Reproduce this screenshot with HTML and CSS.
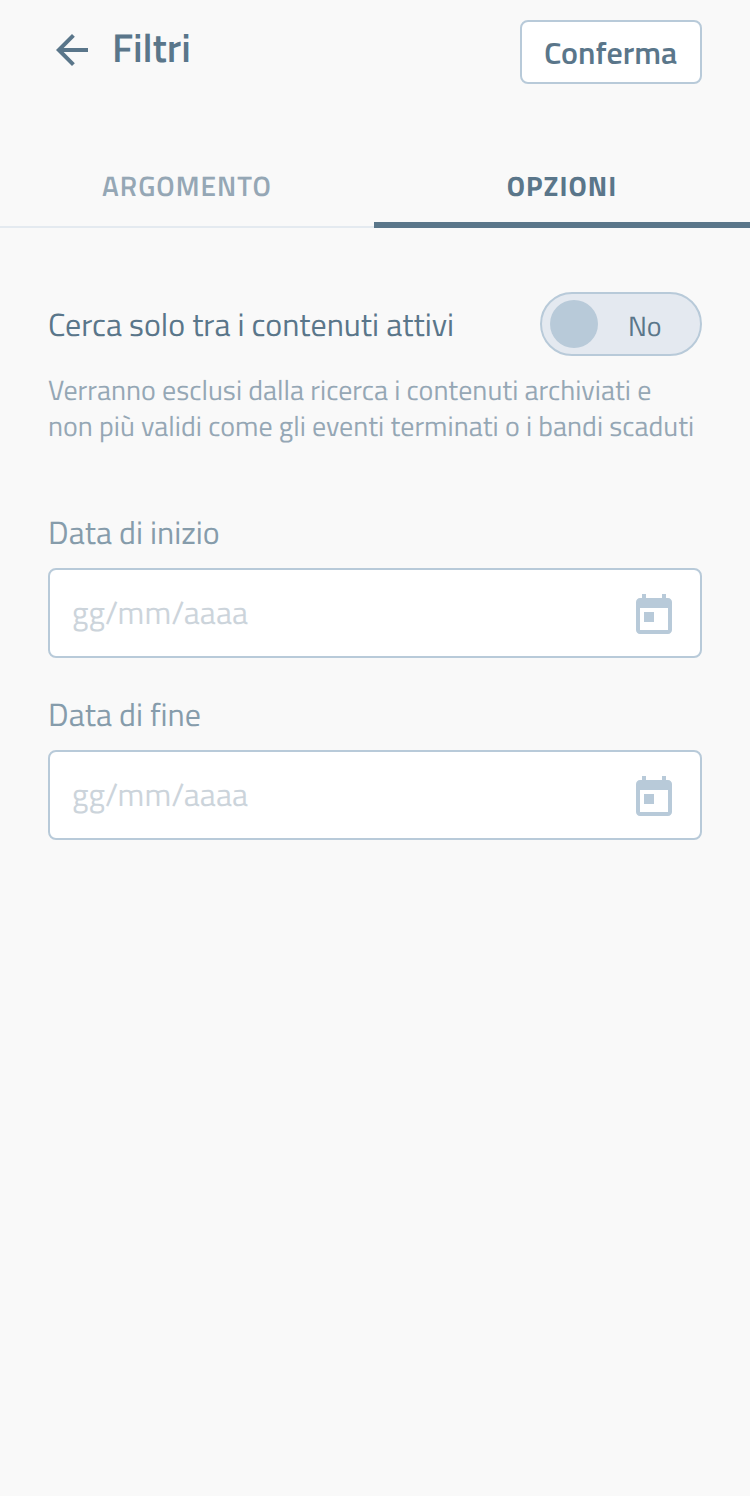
FILE: index.html
```
<!DOCTYPE html>
<html lang="it">
<head>
<meta charset="utf-8">
<title>Filtri</title>
<link rel="stylesheet" href="styles.css">
</head>
<body>
<header class="header">
  <svg class="back" viewBox="0 0 24 24"><path d="M20 11H7.83l5.59-5.59L12 4l-8 8 8 8 1.41-1.41L7.83 13H20v-2z"/></svg>
  <h1 class="title">Filtri</h1>
  <button class="confirm">Conferma</button>
</header>
<nav class="tabs">
  <a class="tab">ARGOMENTO</a>
  <a class="tab tab-active">OPZIONI</a>
</nav>
<main class="content">
  <div class="option">
    <span class="option-label">Cerca solo tra i contenuti attivi</span>
    <div class="toggle"><i class="knob"></i><span class="toggle-text">No</span></div>
  </div>
  <p class="help">Verranno esclusi dalla ricerca i contenuti archiviati e<br>non più validi come gli eventi terminati o i bandi scaduti</p>
  <div class="field">
    <label class="label">Data di inizio</label>
    <div class="input"><span class="placeholder">gg/mm/aaaa</span>
      <svg class="calendar" viewBox="0 0 24 24"><path d="M19 3h-1V1h-2v2H8V1H6v2H5c-1.11 0-1.99.9-1.99 2L3 19c0 1.1.89 2 2 2h14c1.1 0 2-.9 2-2V5c0-1.1-.9-2-2-2zm0 16H5V8h14v11zM7 10h5v5H7z"/></svg>
    </div>
  </div>
  <div class="field">
    <label class="label">Data di fine</label>
    <div class="input"><span class="placeholder">gg/mm/aaaa</span>
      <svg class="calendar" viewBox="0 0 24 24"><path d="M19 3h-1V1h-2v2H8V1H6v2H5c-1.11 0-1.99.9-1.99 2L3 19c0 1.1.89 2 2 2h14c1.1 0 2-.9 2-2V5c0-1.1-.9-2-2-2zm0 16H5V8h14v11zM7 10h5v5H7z"/></svg>
    </div>
  </div>
</main>
</body>
</html>
```
FILE: styles.css
```
* { box-sizing: border-box; }
body {
  margin: 0;
  min-height: 1496px;
  background: #f9f9f9;
  color: #5a768a;
  font-family: "Titillium Web", Roboto, sans-serif;
  font-weight: 400;
  white-space: nowrap;
  text-rendering: geometricPrecision;
}
.header {
  display: flex;
  align-items: flex-start;
  height: 148px;
  padding: 20px 48px 0;
}
.back { width: 48px; height: 48px; margin-top: 6px; fill: #5a768a; }
.title {
  flex: 1;
  margin: 0 0 0 16px;
  font-size: 40px;
  font-weight: 600;
  line-height: 56px;
  letter-spacing: -.1px;
}
.confirm {
  width: 182px;
  height: 64px;
  padding: 0 0 0 22px;
  border: 2px solid #b8cad9;
  border-radius: 8px;
  background: #fff;
  color: #5a768a;
  font: 600 32px/58px "Titillium Web", Roboto, sans-serif;
  text-align: left;
}
.tabs { display: flex; height: 80px; }
.tab {
  width: 374px;
  padding-top: 18px;
  border-bottom: 2px solid #e4eaf0;
  color: #95a7b5;
  font-size: 28px;
  font-weight: 600;
  line-height: 40px;
  letter-spacing: 1px;
  text-align: center;
}
.tab-active { width: 376px; border-bottom: 6px solid #5a768a; color: #5a768a; font-weight: 700; }
.content { padding: 64px 48px 0; }
.option { display: flex; justify-content: space-between; height: 64px; }
.option-label { font-size: 32px; line-height: 66px; }
.toggle {
  display: flex;
  align-items: center;
  width: 162px;
  height: 64px;
  padding-left: 8px;
  border: 2px solid #b8cad9;
  border-radius: 32px;
  background: #e4e9f0;
}
.knob { width: 48px; height: 48px; border-radius: 50%; background: #b8cad9; }
.toggle-text { margin: 3px 0 0 30px; font-size: 28px; line-height: 40px; }
.help { margin: 16px 0 72px; color: #95a7b5; font-size: 28px; line-height: 36px; letter-spacing: .015px; }
.field { margin-bottom: 40px; }
.label { display: block; height: 52px; color: #869cab; font-size: 32px; line-height: 34px; }
.input {
  display: flex;
  justify-content: space-between;
  height: 90px;
  padding: 22px 22px 0;
  border: 2px solid #b8cad9;
  border-radius: 8px;
  background: #fff;
}
.placeholder { color: #ccd4db; font-size: 32px; line-height: 42px; letter-spacing: .05px; }
.calendar { width: 48px; height: 48px; fill: #b8cad9; }
```
